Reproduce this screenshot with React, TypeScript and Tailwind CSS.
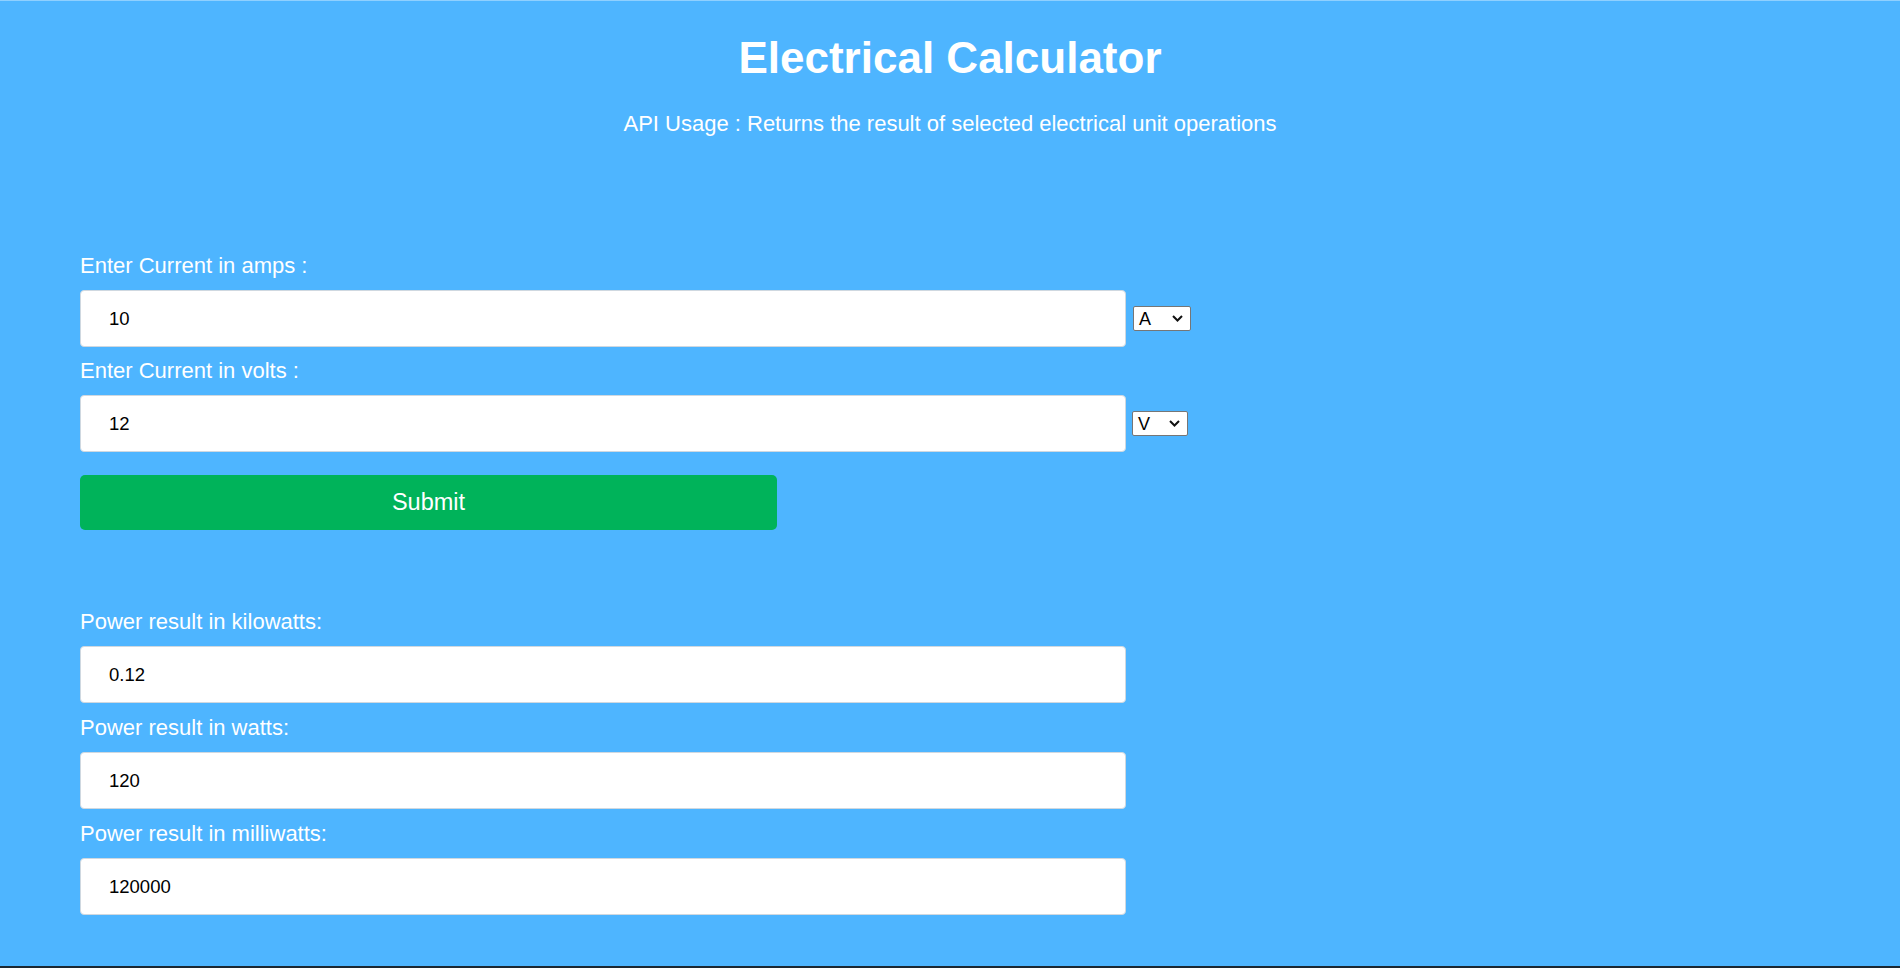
import React from 'react';

function UnitSelect({ value, width }: { value: string; width: string }) {
  return (
    <div
      role="combobox"
      className={`${width} h-[25px] flex items-center justify-between bg-white border border-[#767676] rounded-[2px] pl-[5px] pr-[7px] text-[18px] leading-none text-black`}
    >
      <span>{value}</span>
      <svg width="11" height="7" viewBox="0 0 11 7" fill="none">
        <path d="M1 1l4.5 4.5L10 1" stroke="#111" strokeWidth="2" />
      </svg>
    </div>
  );
}

function Field({ value }: { value: string }) {
  return (
    <input
      readOnly
      value={value}
      className="w-[1046px] h-[57px] bg-white border border-[#cfd8e0] rounded-[4px] pl-[28px] text-[18.5px] text-black outline-none"
    />
  );
}

export default function App() {
  return (
    <div className="min-h-screen bg-[#1c2833] font-['Liberation_Sans',Arial,sans-serif]">
      <div className="h-[966px] bg-[#4eb5ff] border-t border-[#8fd0ff] text-white overflow-hidden">
        {/* Header */}
        <div className="text-center">
          <h1 className="mt-[31px] text-[44px] leading-[51px] font-bold">Electrical Calculator</h1>
          <p className="mt-[28px] text-[22px] leading-[25px]">
            API Usage : Returns the result of selected electrical unit operations
          </p>
        </div>

        {/* Form */}
        <div className="px-[80px] mt-[117px]">
          <label className="block text-[22px] leading-[25px] mb-[12px]">Enter Current in amps :</label>
          <div className="flex items-center gap-[7px]">
            <Field value="10" />
            <UnitSelect value="A" width="w-[58px]" />
          </div>

          <label className="block mt-[11px] text-[22px] leading-[25px] mb-[12px]">Enter Current in volts :</label>
          <div className="flex items-center gap-[6px]">
            <Field value="12" />
            <UnitSelect value="V" width="w-[56px]" />
          </div>

          <button className="mt-[23px] w-[697px] h-[55px] bg-[#00b35a] rounded-[5px] text-white text-[23.5px]">
            Submit
          </button>

          {/* Results */}
          <div className="mt-[79px] flex flex-col">
            <label className="text-[22px] leading-[25px] mb-[12px]">Power result in kilowatts:</label>
            <Field value="0.12" />
            <label className="mt-[12px] text-[22px] leading-[25px] mb-[12px]">Power result in watts:</label>
            <Field value="120" />
            <label className="mt-[12px] text-[22px] leading-[25px] mb-[12px]">Power result in milliwatts:</label>
            <Field value="120000" />
          </div>
        </div>
      </div>
    </div>
  );
}
